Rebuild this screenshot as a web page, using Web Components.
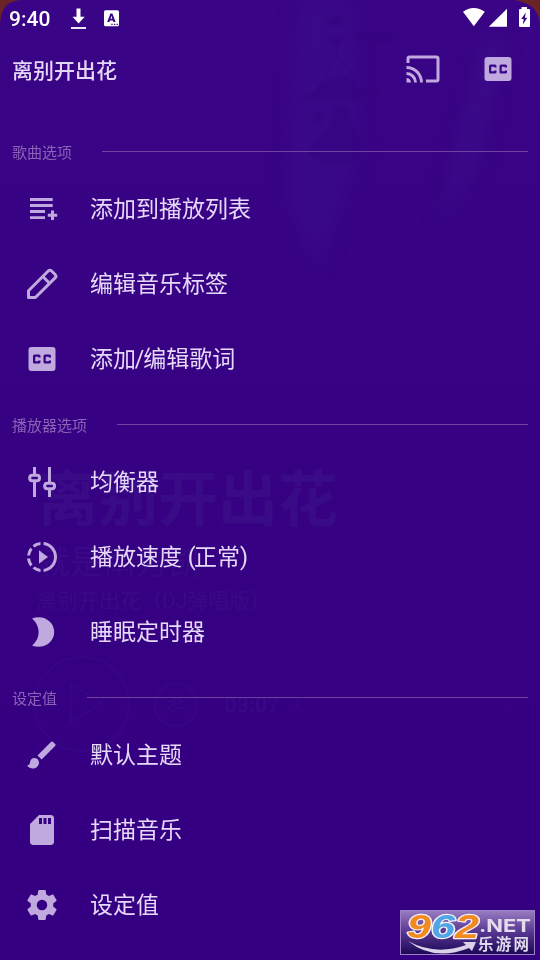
<!DOCTYPE html>
<html lang="zh-CN">
<head>
<meta charset="utf-8">
<title>离别开出花</title>
<style>
html,body{margin:0;height:100%}
body{font-family:Roboto,"Noto Sans CJK SC",sans-serif;background:#350083;overflow:hidden}
</style>
</head>
<body>
<song-sheet></song-sheet>
<script>
const define=(name,html,init)=>customElements.define(name,class extends HTMLElement{
  constructor(){super();this.attachShadow({mode:'open'}).innerHTML=html;}
  connectedCallback(){if(init)init(this,this.shadowRoot);}
});

// All glyphs are drawn in a 36-unit box.
const ICONS={
cast:'<path transform="scale(1.5)" d="M1 10v2a9 9 0 0 1 9 9h2A11 11 0 0 0 1 10m0 4v2a5 5 0 0 1 5 5h2a7 7 0 0 0-7-7m0 4v3h3a3 3 0 0 0-3-3M21 3H3a2 2 0 0 0-2 2v3h2V5h18v14h-7v2h7a2 2 0 0 0 2-2V5a2 2 0 0 0-2-2z"/>',
cc:'<path transform="scale(1.5)" d="M19 4H5a2 2 0 0 0-2 2v12a2 2 0 0 0 2 2h14a2 2 0 0 0 2-2V6a2 2 0 0 0-2-2zm-8 7H9.500v-.5h-2v3h2V13H11v1a1 1 0 0 1-1 1H7a1 1 0 0 1-1-1v-4a1 1 0 0 1 1-1h3a1 1 0 0 1 1 1v1zm7 0h-1.500v-.5h-2v3h2V13H18v1a1 1 0 0 1-1 1h-3a1 1 0 0 1-1-1v-4a1 1 0 0 1 1-1h3a1 1 0 0 1 1 1v1z"/>',
list:'<path d="M6 7h22.700v3H6zM6 13h22.700v3H6zM6 19h15v3H6zM6 25.200h15V28H6zM27 19.500h3v3.300h3.200v3H30V29h-3v-3.200h-3.200v-3H27z"/>',
pencil:'<g fill="none" stroke="#c0a9de" stroke-width="3" stroke-linejoin="round"><path d="M4.500 31.500v-6.800L24.200 5q1.700-1.700 3.400 0l3.500 3.500q1.700 1.700 0 3.400L11.400 31.500z"/><path d="M18.800 10.500l6.800 6.800"/></g>',
eq:'<path d="M9 3h3v30H9zM24 3h3v30h-3z"/><rect x="5.700" y="11.200" width="9.800" height="5.600" rx="2.600" fill="#370384" stroke="#c0a9de" stroke-width="3"/><rect x="20.700" y="19.200" width="9.800" height="5.600" rx="2.600" fill="#370384" stroke="#c0a9de" stroke-width="3"/>',
speed:'<path transform="scale(1.5)" d="M13.050 9.790L10 7.500v9l3.050-2.290L16 12zM11 4.070V2.050c-2.010.2-3.840 1-5.320 2.210L7.100 5.690A7.940 7.940 0 0 1 11 4.070zM5.690 7.100L4.260 5.680A9.950 9.950 0 0 0 2.050 11h2.020c.18-1.460.76-2.790 1.620-3.900zM4.070 13H2.050c.2 2.010 1 3.840 2.210 5.320l1.430-1.430A7.870 7.870 0 0 1 4.070 13zm1.610 6.740A9.980 9.980 0 0 0 11 21.950v-2.020a7.940 7.940 0 0 1-3.900-1.620zM22 12c0 5.160-3.920 9.420-8.950 9.950v-2.020C16.970 19.410 20 16.050 20 12s-3.030-7.410-6.950-7.930V2.050C18.080 2.580 22 6.840 22 12z"/>',
moon:'<path d="M8 4.400C19 .2 30.200 7 30.200 18S18.500 35.800 8 31.500C11.900 28.500 14.600 23.500 14.600 18S11.900 7.500 8 4.400z"/>',
brush:'<path transform="scale(1.5)" d="M7 14c-1.660 0-3 1.340-3 3 0 1.310-1.160 2-2 2 .92 1.220 2.490 2 4 2 2.210 0 4-1.790 4-4 0-1.660-1.340-3-3-3zm13.710-9.370l-1.340-1.340a1 1 0 0 0-1.410 0L9 12.250 11.750 15l8.960-8.960a1 1 0 0 0 0-1.410z"/>',
sd:'<path transform="scale(1.5)" d="M18 2h-8L4.020 8 4 20c0 1.100.9 2 2 2h12c1.100 0 2-.9 2-2V4c0-1.100-.9-2-2-2zm-6 6h-2V4h2v4zm3 0h-2V4h2v4zm3 0h-2V4h2v4z"/>',
gear:'<path transform="scale(1.500)" d="M12 15.500A3.500 3.500 0 0 1 8.500 12 3.500 3.500 0 0 1 12 8.500a3.500 3.500 0 0 1 3.500 3.500 3.500 3.500 0 0 1-3.500 3.500m7.430-2.530c.04-.32.070-.64.070-.97s-.03-.66-.07-1l2.110-1.630c.19-.15.24-.42.12-.64l-2-3.460c-.12-.22-.39-.31-.61-.22l-2.490 1c-.52-.39-1.060-.73-1.690-.98l-.37-2.650A.506.506 0 0 0 14 2h-4c-.25 0-.46.18-.5.42l-.37 2.650c-.63.25-1.170.59-1.690.98l-2.490-1c-.22-.09-.49 0-.61.22l-2 3.460c-.13.22-.07.49.12.64L4.570 11c-.04.34-.07.67-.07 1s.03.65.07.97l-2.110 1.660c-.19.15-.25.42-.12.64l2 3.460c.12.22.39.3.61.22l2.490-1.010c.52.4 1.060.74 1.690.99l.37 2.650c.04.24.25.42.5.42h4c.25 0 .46-.18.5-.42l.37-2.650c.63-.26 1.170-.59 1.690-.99l2.490 1.010c.22.08.49 0 .61-.22l2-3.460c.12-.22.07-.49-.12-.64z"/>'
};

define('md-icon','<style>:host{display:block;width:36px;height:36px;flex:none}svg{display:block;fill:#c0a9de}</style><svg width="36" height="36" viewBox="0 0 36 36"></svg>',
 (h,r)=>{r.querySelector('svg').innerHTML=ICONS[h.getAttribute('name')]||''});

define('status-bar',`<style>
:host{display:flex;height:37px;box-sizing:border-box;padding:0 10px 0 9px;align-items:center;justify-content:space-between}
div{display:flex;align-items:center}
span{font:500 21px/37px Roboto,sans-serif;color:#fff;width:61px;padding-top:2px}
svg{display:block;fill:#fff}
</style><div><span>9:40</span>
<svg width="52" height="37" viewBox="70 0 52 37"><path d="M76.500 8.500h4v8.300h4.200L78.600 23.500l-6.100-6.700h4z"/><path d="M71 27h15v2H71z" opacity=".9"/><rect x="104" y="10.300" width="15" height="16" rx="1.500"/><path d="M107.200 22l3.200-8.500h2l3.200 8.500h-2.200l-.5-1.600h-3l-.5 1.600zM110.500 18.800h1.800l-.9-3z" fill="#380384" fill-rule="evenodd"/><path d="M111.300 23.700h1.300v1.400h-1.300zm2.600 0h1.300v1.400h-1.300zm2.600 0h1.300v1.400h-1.300z" fill="#380384"/></svg></div>
<svg width="68" height="37" viewBox="462 0 68 37"><path d="M463 11.800q4.700-3.800 10.800-3.800t11 3.800L473.800 26.200zM488.800 26.700h18.200V8.700zM521.500 7h5.500v2h2q1 0 1 1v16q0 1-1 1h-9q-1 0-1-1V10q0-1 1-1h1.500z"/><path d="M525.800 12.500l-4.600 6.500h2.500l-.9 5.500 4.500-6.800h-2.500z" fill="#380384"/></svg>`);

define('title-bar',`<style>
:host{display:flex;height:64px;box-sizing:border-box;padding:0 24px 0 12px;align-items:center}
h1{margin:3px 0 0;flex:1;font:500 21px/30px Roboto,"Noto Sans CJK SC",sans-serif;color:#e4d6f6}
.a{display:flex;gap:39px}
</style><h1><slot></slot></h1><div class="a"><md-icon name="cast"></md-icon><md-icon name="cc"></md-icon></div>`);

define('menu-group',`<style>
:host{display:block}
header{display:flex;height:48px;align-items:center;padding:0 12px;gap:30px}
h2{margin:11px 0 0;font:400 15px/24px Roboto,"Noto Sans CJK SC",sans-serif;color:#8b63b7}
i{flex:1;height:1px;background:#7042a2;margin-top:7px}
</style><header><h2></h2><i></i></header><slot></slot>`,(h,r)=>{r.querySelector('h2').textContent=h.getAttribute('label')});

define('menu-row',`<style>
:host{display:flex;height:75px;align-items:center;padding-left:24px;gap:30px;font:400 23px/34px Roboto,"Noto Sans CJK SC",sans-serif;color:#e6d8f8}
span{padding-top:2px}
::slotted(b){font-weight:400;margin:0 -1.200px}
::slotted(em){font-style:normal;margin-right:-1.500px}
</style><md-icon></md-icon><span><slot></slot></span>`,(h,r)=>{r.querySelector('md-icon').shadowRoot.querySelector('svg').innerHTML=ICONS[h.getAttribute('icon')]});

// Player screen that shows faintly through the translucent sheet.
define('player-backdrop',`<style>
:host{position:absolute;inset:0;z-index:-1;overflow:hidden;background:#6a2428}
svg{display:block}
text{font-family:Roboto,"Noto Sans CJK SC",sans-serif}
</style><svg width="540" height="960" viewBox="0 0 540 960" color-interpolation-filters="sRGB">
<defs><linearGradient id="g" x2="0" y2="1"><stop stop-color="#390485"/><stop offset=".45" stop-color="#360283"/><stop offset="1" stop-color="#340081"/></linearGradient>
<filter id="b" x="-50%" y="-50%" width="200%" height="200%"><feGaussianBlur stdDeviation="9"/></filter><filter id="s"><feGaussianBlur stdDeviation="1.200"/></filter></defs>
<path d="M0 960V26Q0 0 22 0H514Q540 4 540 26V960z" fill="url(#g)"/>
<g filter="url(#b)" fill="#3b0c8b"><path d="M298 0h55l5 150-40 120-30-70z" opacity=".7"/><path d="M484 38h22l-32 130-35 55 20-80z" opacity=".9"/></g>
<g filter="url(#s)" fill="#350480"><path d="M315 92q12-17 27-15 14 3 13 13l23 1-20 7-58 3zM326 20l12-6 6 8-12 6zM329 36h14l-4 8h-7zM333 105h12l8 20 8 25-8 11-28 4-17-12 11-17 11-7zM314 112h9v11h-9zM352 34l46-2-12 10-30-3z" opacity=".7"/></g>
<path d="M337 40v18L315 92M338 58l20 22" fill="none" stroke="#350480" opacity=".7"/>
<g fill="#3d118a"><text x="38" y="521" font-size="60" font-weight="700" opacity=".6">离别开出花</text></g>
<g fill="#3c0e89" opacity=".6"><text x="37" y="574" font-size="33">就是南方凯</text></g>
<g fill="#3d118a" opacity=".6"><text x="36" y="608" font-size="21">离别开出花（DJ弹唱版）</text><text x="225" y="712" font-size="20" letter-spacing="1">03:07</text></g>
<g fill="none" stroke="#3b0b88" stroke-width="2" opacity=".5"><circle cx="82" cy="704" r="47"/><path d="M71 684v38l30-19zM295 698l5 5-5 5"/><circle cx="176" cy="705" r="21"/><path d="M166 701h8m7 0h5m-20 7h4m7 0h8"/><circle cx="177" cy="701" r="3"/><circle cx="173" cy="708" r="3"/></g>
</svg>`);

define('site-badge',`<style>
:host{position:absolute;left:400px;top:909px;width:135px;height:46px}
svg{display:block}.n{font:italic 700 33px "Liberation Sans",sans-serif}.t{font:700 17.500px Inter,"Liberation Sans",sans-serif}.c{font:700 15.500px "Noto Sans CJK SC",sans-serif}
</style><svg width="135" height="46" viewBox="0 0 135 46"><defs><linearGradient id="w" x2="0" y2="1"><stop stop-color="#9a7cc2"/><stop offset=".5" stop-color="#56358f"/><stop offset="1" stop-color="#1b0856"/></linearGradient></defs>
<rect x=".5" y="1.500" width="134" height="44" fill="url(#w)" stroke="#9d80c8"/>
<path d="M8 32Q35 47 66 36l-3-3 13 0-4 9-3-3Q34 53 8 32z" fill="#d9d2e8"/>
<g class="n" stroke="#f5f0fa" stroke-width="2.400" paint-order="stroke" stroke-linejoin="round"><text x="7" y="28.500" fill="#f28a22" textLength="72" lengthAdjust="spacingAndGlyphs">9<tspan fill="#50a5e5">6</tspan>2</text></g>
<text class="t" x="79" y="22.500" fill="#e4dded" textLength="52" lengthAdjust="spacingAndGlyphs">.NET</text><text class="c" x="78" y="41" fill="#e0d9ec" textLength="51">乐游网</text></svg>`);

define('song-sheet',`<style>
:host{display:block;position:relative;height:960px;width:540px;isolation:isolate}
main{display:flex;flex-direction:column}
.menu{padding-top:22.500px}
</style><player-backdrop></player-backdrop><main><status-bar></status-bar><title-bar>离别开出花</title-bar><div class="menu">
<menu-group label="歌曲选项"><menu-row icon="list">添加到播放列表</menu-row><menu-row icon="pencil">编辑音乐标签</menu-row><menu-row icon="cc">添加<b>/</b>编辑歌词</menu-row></menu-group>
<menu-group label="播放器选项"><menu-row icon="eq">均衡器</menu-row><menu-row icon="speed">播放速度 <em>(</em>正常)</menu-row><menu-row icon="moon">睡眠定时器</menu-row></menu-group>
<menu-group label="设定值"><menu-row icon="brush">默认主题</menu-row><menu-row icon="sd">扫描音乐</menu-row><menu-row icon="gear">设定值</menu-row></menu-group>
</div></main><site-badge></site-badge>`);
</script>
</body>
</html>
